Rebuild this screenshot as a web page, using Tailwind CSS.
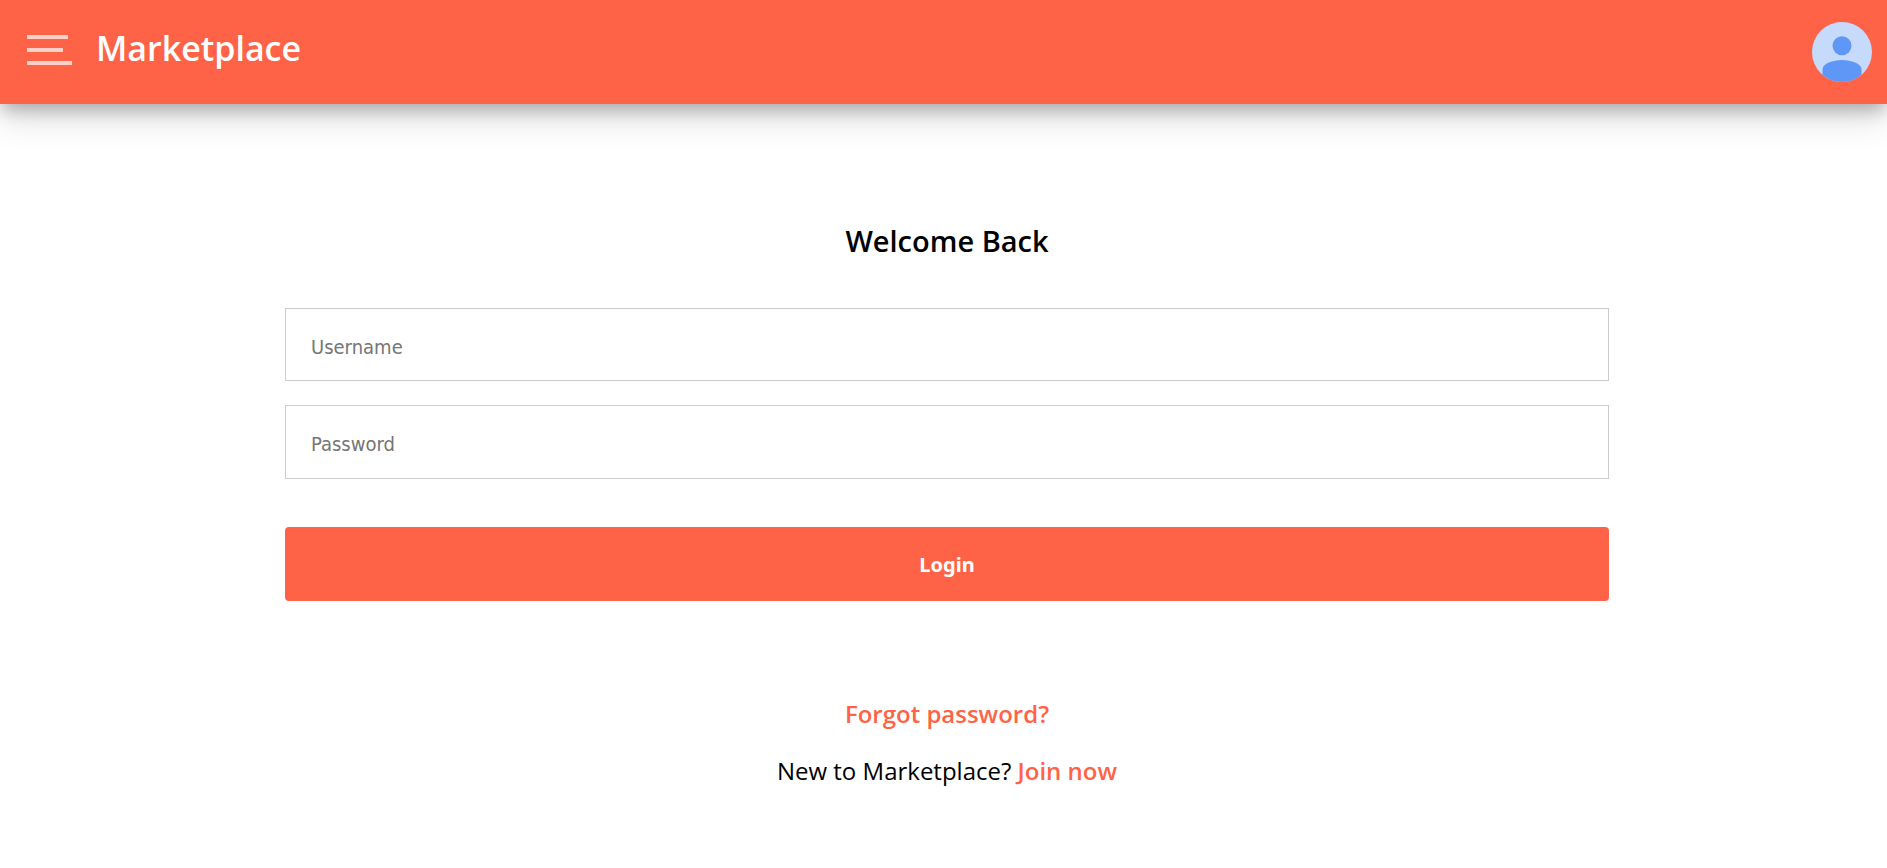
<!DOCTYPE html>
<html lang="en">
<head>
<meta charset="utf-8">
<meta name="viewport" content="width=device-width, initial-scale=1">
<title>Marketplace</title>
<script src="https://cdn.jsdelivr.net/npm/@tailwindcss/browser@4"></script>
</head>
<body class="min-h-screen bg-white font-['Open_Sans',sans-serif] text-black">
<header class="flex h-[104px] items-center bg-[#ff6347] pl-[27px] pr-[15px] shadow-[0_16px_32px_0_rgba(0,0,0,0.12),0_8px_16px_-2px_rgba(0,0,0,0.26)]">
  <button type="button" aria-label="Open menu" class="mb-1 flex w-[45px] cursor-pointer flex-col gap-[9px]">
    <span class="h-1 w-[41px] bg-white/70"></span>
    <span class="h-1 w-9 bg-white/70"></span>
    <span class="h-1 w-[45px] bg-white/70"></span>
  </button>
  <h1 class="mb-2 ml-6 text-[34px] font-semibold leading-12 text-white">Marketplace</h1>
  <a href="#" aria-label="Account" class="ml-auto">
    <svg class="size-[60px]" viewBox="0 0 60 60">
      <defs><clipPath id="avatar"><circle cx="30" cy="30" r="30"/></clipPath></defs>
      <g clip-path="url(#avatar)">
        <path fill="#c6dafc" d="M0 0h60v60H0z"/>
        <circle cx="30" cy="23.700" r="9.500" fill="#5e97f6"/>
        <path fill="#5e97f6" d="M10.500 60V47.500C10.500 41.500 21 38 30 38s19.500 3.500 19.500 9.500V60z"/>
      </g>
    </svg>
  </a>
</header>
<main class="flex flex-col pl-[285px] pr-[278px] pt-[117px] text-center">
  <h2 class="text-[29px] font-semibold leading-10">Welcome Back</h2>
  <form class="mt-[47px] flex flex-col">
    <input type="text" aria-label="Username" placeholder="Username" class="h-[73px] w-full border border-[#ccc] px-[25px] pt-1 font-['DejaVu_Sans_Condensed','Noto_Sans',sans-serif] text-xl placeholder:text-[#757575]">
    <input type="password" aria-label="Password" placeholder="Password" class="mt-6 h-[74px] w-full border border-[#ccc] px-[25px] pt-1 font-['DejaVu_Sans_Condensed','Noto_Sans',sans-serif] text-xl placeholder:text-[#757575]">
    <button type="submit" class="mt-12 h-[74px] w-full cursor-pointer rounded bg-[#ff6347] pt-0.5 font-['Noto_Sans',sans-serif] text-xl font-bold text-white">Login</button>
  </form>
  <a href="#" class="mt-[95px] self-center text-2xl font-semibold leading-9 text-[#ff6347]">Forgot password?</a>
  <p class="mt-[21px] text-2xl leading-9">New to Marketplace? <a href="#" class="font-semibold text-[#ff6347]">Join now</a></p>
</main>
</body>
</html>
